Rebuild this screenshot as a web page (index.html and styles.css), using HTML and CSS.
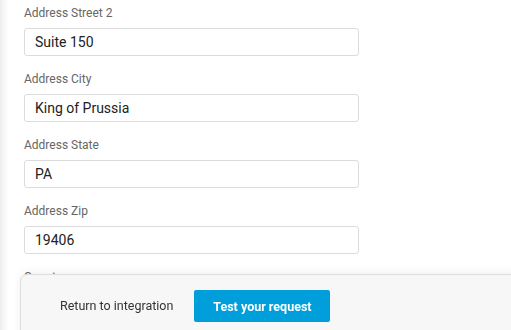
FILE: index.html
```html
<!DOCTYPE html>
<html lang="en">
<head>
    <meta charset="UTF-8">
    <meta name="viewport" content="width=device-width, initial-scale=1.0">
    <title>Request fields</title>
    <link rel="stylesheet" href="styles.css">
</head>
<body>
    <div class="form">
        <div class="field">
            <label class="label">Address Street 2</label>
            <input class="input" type="text" value="Suite 150">
        </div>
        <div class="field">
            <label class="label">Address City</label>
            <input class="input" type="text" value="King of Prussia">
        </div>
        <div class="field">
            <label class="label">Address State</label>
            <input class="input" type="text" value="PA">
        </div>
        <div class="field">
            <label class="label">Address Zip</label>
            <input class="input" type="text" value="19406">
        </div>
        <div class="field">
            <label class="label">Country</label>
            <input class="input" type="text" value="US">
        </div>
    </div>

    <div class="footer">
        <a class="back" href="#">Return to integration</a>
        <button class="test">Test your request</button>
    </div>
</body>
</html>
```

FILE: styles.css
```css
html, body{
    margin: 0;
    height: 100%;
}
body{
    font-family: Roboto, "Liberation Sans", sans-serif;
    background: linear-gradient(to right, #ececec, #f9f9f9 5px, #fff 9px);
    overflow: hidden;
}
.form{
    padding: 5px 0 0 24px;
    width: 335px;
}
.field{
    display: flex;
    flex-direction: column;
    margin-bottom: 15px;
}
.label{
    font-size: 12px;
    line-height: 16px;
    color: #666;
    margin-bottom: 7px;
}
.input{
    box-sizing: border-box;
    height: 28px;
    width: 335px;
    border: 1px solid #dcdcdc;
    border-radius: 3px;
    padding: 0 10px;
    font-family: Roboto, "Liberation Sans", sans-serif;
    font-size: 14px;
    color: #222;
    background: #fff;
}
.footer{
    position: fixed;
    left: 20px;
    top: 274px;
    right: -10px;
    bottom: -10px;
    display: flex;
    align-items: flex-start;
    gap: 21px;
    padding: 15px 0 0 39px;
    background: #f7f7f7;
    border: 1px solid #dedede;
    border-radius: 7px 0 0 0;
    box-shadow: 0 -2px 8px rgba(0, 0, 0, 0.06);
}
.back{
    font-size: 12.5px;
    line-height: 32px;
    color: #333;
    text-decoration: none;
}
.test{
    height: 32px;
    width: 136px;
    border: none;
    border-radius: 2px;
    background: #009fdc;
    color: #fff;
    font-family: Roboto, "Liberation Sans", sans-serif;
    font-size: 12.5px;
    font-weight: bold;
}
```
